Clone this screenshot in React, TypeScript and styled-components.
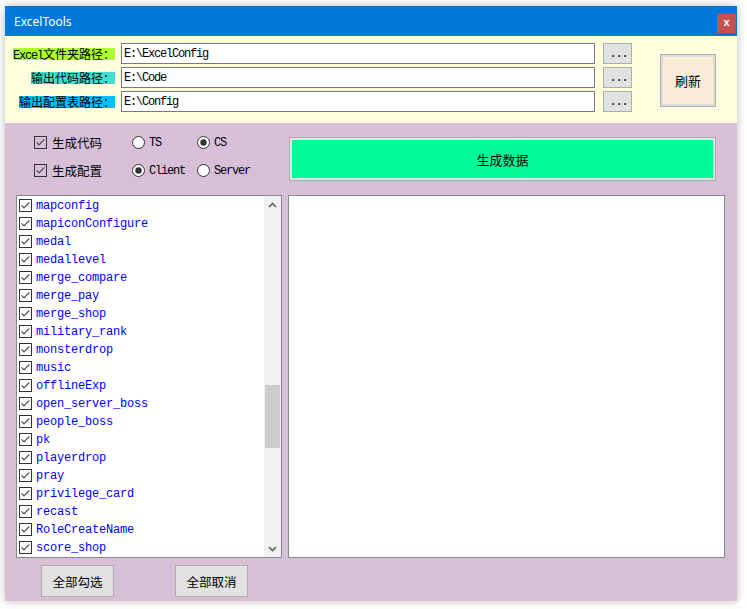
import React from "react";
import styled, { createGlobalStyle } from "styled-components";

const CJK = '"Noto Sans CJK SC", "Noto Sans", sans-serif';
const MONO = '"Liberation Mono", "Noto Sans CJK SC", monospace';

const Global = createGlobalStyle`
  html, body { margin: 0; padding: 0; background: #ffffff; }
  * { box-sizing: border-box; }
`;

const Page = styled.div`
  padding: 6px 0 0 5px;
  width: 747px;
  height: 609px;
`;

const Window = styled.div`
  width: 732px;
  height: 595px;
  display: flex;
  flex-direction: column;
  box-shadow: 0 0 9px rgba(0, 0, 0, 0.28);
  font-family: ${CJK};
`;

const TitleBar = styled.div`
  height: 30px;
  background: #0078d7;
  display: flex;
  align-items: center;
  padding-left: 9px;
`;

const Title = styled.span`
  color: #ffffff;
  font-family: "Noto Sans", "Open Sans", sans-serif;
  font-size: 12px;
  flex: 1;
`;

const CloseBtn = styled.div`
  width: 19px;
  height: 19px;
  background: #c75050;
  color: #ffffff;
  font-family: "Liberation Sans", sans-serif;
  font-weight: bold;
  font-size: 11px;
  line-height: 17px;
  text-align: center;
  align-self: flex-end;
  margin-bottom: 3px;
  margin-right: 1px;
`;

const TopPanel = styled.div`
  height: 87px;
  background: #ffffe0;
  display: flex;
  padding-top: 7px;
`;

const PathRows = styled.div`
  display: flex;
  flex-direction: column;
  gap: 3px;
`;

const PathRow = styled.div`
  display: flex;
  align-items: center;
  height: 21px;
`;

const LabelCell = styled.div`
  width: 110px;
  display: flex;
  justify-content: flex-end;
`;

const Label = styled.span<{ $bg: string }>`
  background: ${(p) => p.$bg};
  font-size: 12px;
  line-height: 12px;
  height: 12px;
  color: #000;
  white-space: nowrap;
  display: inline-block;
  overflow: visible;
`;

const Mono = styled.span`
  font-family: ${MONO};
  font-size: 12px;
  letter-spacing: -1.2px;
  vertical-align: baseline;
`;

const TextBox = styled.div`
  width: 474px;
  height: 21px;
  margin-left: 6px;
  background: #ffffff;
  border: 1px solid #7a7a7a;
  padding-left: 2px;
  display: flex;
  align-items: center;
  color: #000;
`;

const DotsBtn = styled.div`
  width: 29px;
  height: 21px;
  margin-left: 8px;
  background: #e1e1e1;
  border: 1px solid #adadad;
  display: flex;
  align-items: flex-end;
  justify-content: center;
  padding-bottom: 3px;
  padding-left: 2px;
  line-height: 12px;
`;

const RefreshBtn = styled.div`
  width: 56px;
  height: 53px;
  margin-left: 28px;
  margin-top: 11px;
  background: #faebd7;
  border: 1px solid #adadad;
  box-shadow: inset 0 0 0 2px #dedede;
  display: flex;
  align-items: center;
  justify-content: center;
  font-size: 13px;
  color: #000;
`;

const Body = styled.div`
  flex: 1;
  background: #d8bfd8;
  display: flex;
  flex-direction: column;
  padding: 0 12px 0 11px;
`;

const TopRow = styled.div`
  height: 72px;
  display: flex;
  justify-content: space-between;
`;

const Options = styled.div`
  margin-left: 18px;
  padding-top: 9px;
  display: grid;
  grid-template-columns: 98px 65px 70px;
  grid-auto-rows: 20px;
  row-gap: 8px;
  align-content: start;
`;

const Opt = styled.div`
  display: flex;
  align-items: center;
  gap: 5px;
  font-size: 12.5px;
  color: #000;
  white-space: nowrap;
`;

const RadioText = styled(Mono)`
  margin-left: -1px;
  padding-top: 2px;
`;

const GenerateBtn = styled.div`
  width: 427px;
  height: 44px;
  margin-top: 14px;
  margin-right: 9px;
  background: #00fa9a;
  border: 1px solid #adadad;
  box-shadow: inset 0 0 0 2px #e3e3e3;
  display: flex;
  align-items: center;
  justify-content: center;
  font-size: 13px;
  color: #000;
`;

const Middle = styled.div`
  height: 363px;
  display: flex;
  gap: 6px;
`;

const ListBox = styled.div`
  width: 266px;
  height: 363px;
  background: #ffffff;
  border: 1px solid #828790;
  display: flex;
`;

const Items = styled.div`
  flex: 1;
  display: flex;
  flex-direction: column;
  padding-left: 2px;
`;

const Item = styled.div`
  height: 18px;
  display: flex;
  align-items: center;
  gap: 4px;
  font-family: ${MONO};
  font-size: 12px;
  letter-spacing: -0.2px;
  color: #0000ff;
  white-space: nowrap;
`;

const ItemText = styled.span`
  padding-top: 1px;
`;

const ScrollBar = styled.div`
  width: 17px;
  background: #f0f0f0;
  display: flex;
  flex-direction: column;
`;

const Arrow = styled.div`
  height: 17px;
  display: flex;
  align-items: center;
  justify-content: center;
`;

const Track = styled.div`
  flex: 1;
  display: flex;
  flex-direction: column;
  align-items: center;
`;

const Thumb = styled.div`
  width: 15px;
  height: 63px;
  margin-top: 172px;
  background: #cdcdcd;
`;

const OutputBox = styled.div`
  width: 437px;
  height: 363px;
  background: #ffffff;
  border: 1px solid #828790;
`;

const BottomRow = styled.div`
  display: flex;
  margin-top: 7px;
  padding-left: 25px;
  gap: 61px;
`;

const PlainBtn = styled.div`
  width: 73px;
  height: 32px;
  background: #e1e1e1;
  border: 1px solid #adadad;
  display: flex;
  align-items: center;
  justify-content: center;
  font-size: 12.5px;
  color: #000;
`;

const CheckBox = ({ fill }: { fill: string }) => (
  <svg width="13" height="13" viewBox="0 0 13 13" style={{ flex: "none" }}>
    <rect x="0.5" y="0.5" width="12" height="12" fill={fill} stroke="#333333" />
    <polyline points="2.6,6.4 5,8.9 10.4,3.3" fill="none" stroke="#4a4a4a" strokeWidth="1.2" />
  </svg>
);

const Radio = ({ checked }: { checked: boolean }) => (
  <svg width="13" height="13" viewBox="0 0 13 13" style={{ flex: "none" }}>
    <circle cx="6.5" cy="6.5" r="6" fill="#ffffff" stroke="#333333" />
    {checked && <circle cx="6.5" cy="6.5" r="3.2" fill="#333333" />}
  </svg>
);

const Chevron = ({ up }: { up: boolean }) => (
  <svg width="9" height="6" viewBox="0 0 9 6">
    <polyline
      points={up ? "1,5 4.5,1.5 8,5" : "1,1 4.5,4.5 8,1"}
      fill="none"
      stroke="#606060"
      strokeWidth="1.6"
    />
  </svg>
);

const items = [
  "mapconfig",
  "mapiconConfigure",
  "medal",
  "medallevel",
  "merge_compare",
  "merge_pay",
  "merge_shop",
  "military_rank",
  "monsterdrop",
  "music",
  "offlineExp",
  "open_server_boss",
  "people_boss",
  "pk",
  "playerdrop",
  "pray",
  "privilege_card",
  "recast",
  "RoleCreateName",
  "score_shop",
];

const paths = [
  { bg: "#adff2f", label: (<><Mono>Excel</Mono>文件夹路径：</>), value: "E:\\ExcelConfig" },
  { bg: "#40e0d0", label: <>输出代码路径：</>, value: "E:\\Code" },
  { bg: "#00bfff", label: <>输出配置表路径：</>, value: "E:\\Config" },
];

export default function App() {
  return (
    <>
      <Global />
      <Page>
        <Window>
          <TitleBar>
            <Title>ExcelTools</Title>
            <CloseBtn>x</CloseBtn>
          </TitleBar>
          <TopPanel>
            <PathRows>
              {paths.map((p, i) => (
                <PathRow key={i}>
                  <LabelCell>
                    <Label $bg={p.bg}>{p.label}</Label>
                  </LabelCell>
                  <TextBox>
                    <Mono>{p.value}</Mono>
                  </TextBox>
                  <DotsBtn>
                    <Mono>...</Mono>
                  </DotsBtn>
                </PathRow>
              ))}
            </PathRows>
            <RefreshBtn>刷新</RefreshBtn>
          </TopPanel>
          <Body>
            <TopRow>
              <Options>
                <Opt>
                  <CheckBox fill="transparent" />
                  生成代码
                </Opt>
                <Opt>
                  <Radio checked={false} />
                  <RadioText>TS</RadioText>
                </Opt>
                <Opt>
                  <Radio checked={true} />
                  <RadioText>CS</RadioText>
                </Opt>
                <Opt>
                  <CheckBox fill="transparent" />
                  生成配置
                </Opt>
                <Opt>
                  <Radio checked={true} />
                  <RadioText>Client</RadioText>
                </Opt>
                <Opt>
                  <Radio checked={false} />
                  <RadioText>Server</RadioText>
                </Opt>
              </Options>
              <GenerateBtn>生成数据</GenerateBtn>
            </TopRow>
            <Middle>
              <ListBox>
                <Items>
                  {items.map((it) => (
                    <Item key={it}>
                      <CheckBox fill="#ffffff" />
                      <ItemText>{it}</ItemText>
                    </Item>
                  ))}
                </Items>
                <ScrollBar>
                  <Arrow>
                    <Chevron up={true} />
                  </Arrow>
                  <Track>
                    <Thumb />
                  </Track>
                  <Arrow>
                    <Chevron up={false} />
                  </Arrow>
                </ScrollBar>
              </ListBox>
              <OutputBox />
            </Middle>
            <BottomRow>
              <PlainBtn>全部勾选</PlainBtn>
              <PlainBtn>全部取消</PlainBtn>
            </BottomRow>
          </Body>
        </Window>
      </Page>
    </>
  );
}
